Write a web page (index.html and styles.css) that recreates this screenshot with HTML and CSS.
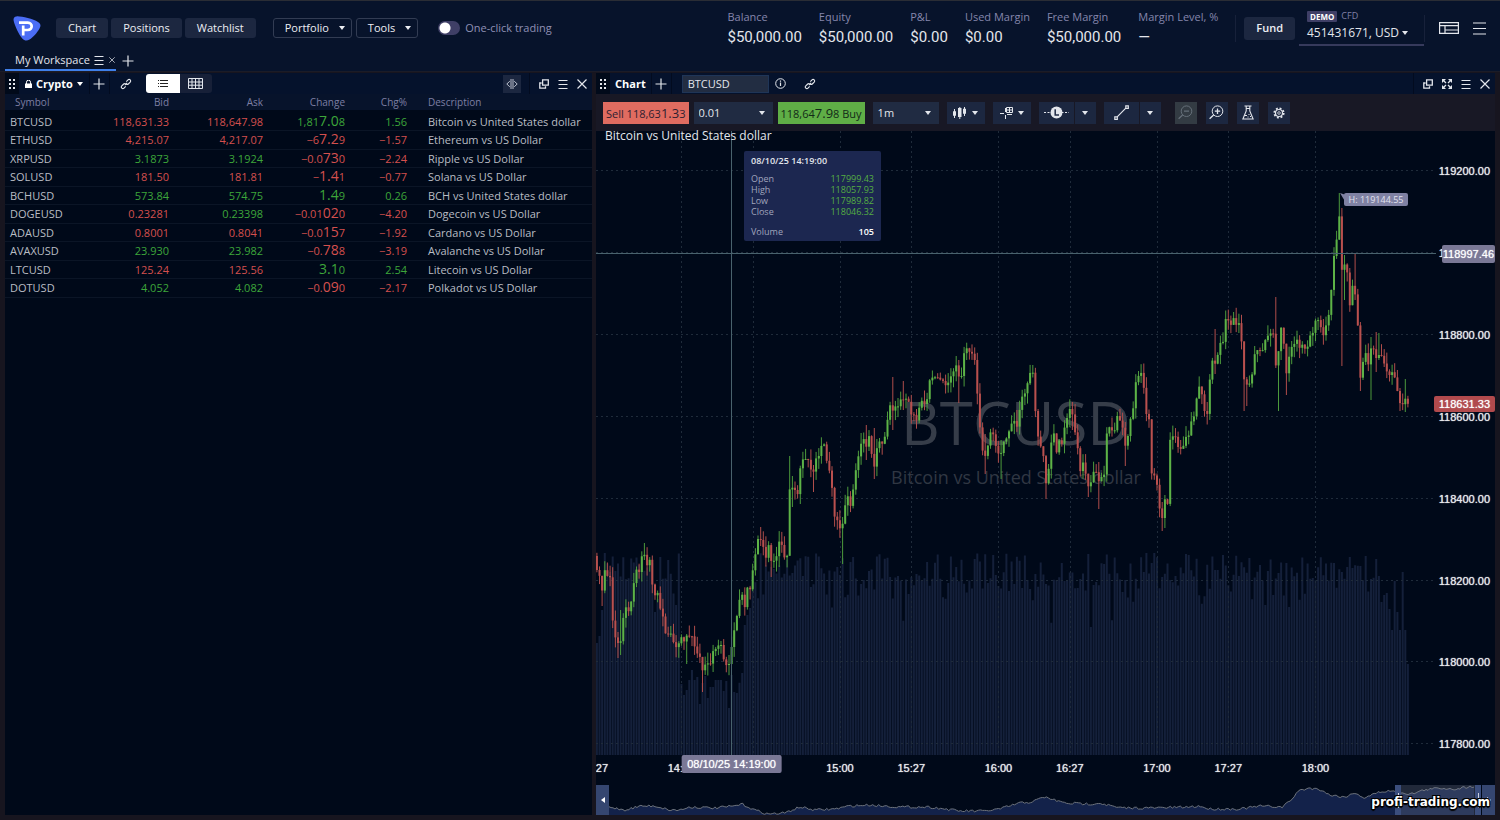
FILE: index.html
```html
<!DOCTYPE html>
<html lang="en">
<head>
<meta charset="utf-8">
<title>My Workspace</title>
<link rel="stylesheet" href="styles.css">
</head>
<body>
<svg class="defs" aria-hidden="true">
  <symbol id="i-link" viewBox="0 0 12 12"><g fill="none" stroke="currentColor" stroke-width="1.1"><path d="M6.3 3.6 8 1.9a1.5 1.5 0 0 1 2.2 2.2L8.3 6a1.5 1.5 0 0 1-2.1 0"/><path d="M5.7 8.4 4 10.1a1.5 1.5 0 0 1-2.2-2.2L3.7 6a1.5 1.5 0 0 1 2.1 0"/><path d="M4.8 7.2 7.2 4.8"/></g></symbol>
  <symbol id="i-grip" viewBox="0 0 7 10"><path fill="currentColor" d="M0 0h2v2H0zM4 0h2v2H4zM0 4h2v2H0zM4 4h2v2H4zM0 8h2v2H0zM4 8h2v2H4z"/></symbol>
  <symbol id="i-plus" viewBox="0 0 12 12"><path stroke="currentColor" stroke-width="1.2" d="M6 .5v11M.5 6h11"/></symbol>
  <symbol id="i-menu" viewBox="0 0 10 10"><path stroke="currentColor" stroke-width="1" d="M.5 1.500h9M.5 5.500h9M.5 9.500h9"/></symbol>
  <symbol id="i-close" viewBox="0 0 10 10"><path stroke="currentColor" stroke-width="1.2" d="M.5.5l9 9M9.500.5l-9 9"/></symbol>
  <symbol id="i-pop" viewBox="0 0 10 10"><g fill="none" stroke="currentColor" stroke-width="1.3"><path d="M3.600.8h5.700v5.300H3.600z"/><path d="M2.600 4H.8v5.200h5.700V7.200"/></g></symbol>
  <symbol id="i-caret" viewBox="0 0 6 4"><path fill="currentColor" d="M0 0h6L3 4z"/></symbol>
</svg>

<div class="app">
  <header class="top">
    <svg class="logo" viewBox="0 0 28 25" role="img" aria-label="Logo">
      <path fill="#4b6df5" d="M3.500.4C8 0 20 3 25 6c3 1.700 3 4 1.500 6.500C24 17 20 21.500 16.500 23.500c-2.500 1.500-5 1.300-7-.8C6 19 1.500 9 .6 4.500.2 2 1.300.6 3.500.4z"/>
      <path fill="none" stroke="#fff" stroke-width="2.700" d="M6 6.700h8.800c5.200 0 5.200 7.300 0 7.300h-4.600v5.500M10.200 9.400v5"/>
    </svg>
    <nav class="group nav">
      <button class="btn">Chart</button><button class="btn">Positions</button><button class="btn">Watchlist</button>
    </nav>
    <div class="group">
      <button class="btn outline">Portfolio <svg class="caret"><use href="#i-caret"/></svg></button>
      <button class="btn outline">Tools <svg class="caret"><use href="#i-caret"/></svg></button>
    </div>
    <label class="toggle"><input type="checkbox"><span>One-click trading</span></label>
    <dl class="metrics">
      <div><dt>Balance</dt><dd>$50,000.00</dd></div>
      <div><dt>Equity</dt><dd>$50,000.00</dd></div>
      <div><dt>P&amp;L</dt><dd>$0.00</dd></div>
      <div><dt>Used Margin</dt><dd>$0.00</dd></div>
      <div><dt>Free Margin</dt><dd>$50,000.00</dd></div>
      <div><dt>Margin Level, %</dt><dd>—</dd></div>
    </dl>
    <div class="fund-wrap"><button class="btn fund">Fund</button></div>
    <button class="account">
      <span class="kind"><b>DEMO</b>CFD</span>
      <span class="number">451431671, USD <svg class="caret"><use href="#i-caret"/></svg></span>
    </button>
    <div class="tools">
      <button class="icon" aria-label="Layout"><svg width="20" height="12" viewBox="0 0 20 12"><path fill="none" stroke="currentColor" stroke-width="1.200" d="M.6.6h18.800v10.800H.6zM.6 3.600h18.800M6 3.600v7.800M6 8h13.400"/></svg></button>
      <button class="icon" aria-label="Menu"><svg width="13" height="13" viewBox="0 0 13 13"><path stroke="currentColor" stroke-width="1.200" d="M0 1h13M0 6.500h13M0 12h13"/></svg></button>
    </div>
  </header>

  <div class="tabs">
    <div class="tab">My Workspace
      <button class="icon" aria-label="Workspace menu"><svg width="10" height="10"><use href="#i-menu"/></svg></button>
      <button class="icon" aria-label="Close workspace"><svg width="6" height="6"><use href="#i-close"/></svg></button>
    </div>
    <button class="icon" aria-label="Add workspace"><svg width="12" height="12"><use href="#i-plus"/></svg></button>
  </div>

  <main class="panels">
    <section class="panel">
      <div class="bar">
        <span class="grip"><svg width="7" height="10"><use href="#i-grip"/></svg></span>
        <button class="title list"><svg width="7" height="8" viewBox="0 0 7 8"><path fill="currentColor" d="M0 3.500h7V8H0z"/><path fill="none" stroke="currentColor" d="M1.500 4V2.200a2 2 0 0 1 4 0V4"/></svg>Crypto<svg class="caret"><use href="#i-caret"/></svg></button>
        <button class="cell" aria-label="Add"><svg width="12" height="12"><use href="#i-plus"/></svg></button>
        <button class="cell linkcell" aria-label="Link"><svg width="12" height="12"><use href="#i-link"/></svg></button>
        <div class="views">
          <button class="on" aria-label="List view"><svg width="10" height="8" viewBox="0 0 10 8"><path stroke="currentColor" d="M0 .5h1M0 3.500h1M0 6.500h1M2 .5h8M2 3.500h8M2 6.500h8"/></svg></button>
          <button aria-label="Grid view"><svg width="15" height="11" viewBox="0 0 15 11"><path fill="none" stroke="currentColor" d="M.5.5h14v10H.5zM.5 4h14M.5 7.200h14M4 .5v10M7.500.5v10M11 .5v10"/></svg></button>
        </div>
        <span class="fill"></span>
        <button class="fit" aria-label="Fit columns"><svg width="12" height="10" viewBox="0 0 12 10"><path fill="none" stroke="currentColor" d="M5 0v10M7 0v10M3.800 2.200.8 5l3 2.800M8.200 2.200l3 2.800-3 2.800"/></svg></button>
        <div class="winbtns">
          <button class="icon" aria-label="Detach"><svg width="10" height="10"><use href="#i-pop"/></svg></button>
          <button class="icon" aria-label="Menu"><svg width="10" height="10"><use href="#i-menu"/></svg></button>
          <button class="icon" aria-label="Close"><svg width="10" height="10"><use href="#i-close"/></svg></button>
        </div>
      </div>
      <table class="quotes">
        <colgroup><col class="c-sym"><col class="c-bid"><col class="c-ask"><col class="c-chg"><col class="c-pct"><col></colgroup>
        <thead><tr><th>Symbol</th><th>Bid</th><th>Ask</th><th>Change</th><th>Chg%</th><th>Description</th></tr></thead>
        <tbody>
          <tr><td>BTCUSD</td><td class="dn">118,631.33</td><td class="dn">118,647.98</td><td class="up">1,81<b>7.0</b>8</td><td class="up">1.56</td><td>Bitcoin vs United States dollar</td></tr>
          <tr><td>ETHUSD</td><td class="dn">4,215.07</td><td class="dn">4,217.07</td><td class="dn">−6<b>7.2</b>9</td><td class="dn">−1.57</td><td>Ethereum vs US Dollar</td></tr>
          <tr><td>XRPUSD</td><td class="up">3.1873</td><td class="up">3.1924</td><td class="dn">−0.0<b>73</b>0</td><td class="dn">−2.24</td><td>Ripple vs US Dollar</td></tr>
          <tr><td>SOLUSD</td><td class="dn">181.50</td><td class="dn">181.81</td><td class="dn">−<b>1.4</b>1</td><td class="dn">−0.77</td><td>Solana vs US Dollar</td></tr>
          <tr><td>BCHUSD</td><td class="up">573.84</td><td class="up">574.75</td><td class="up"><b>1.4</b>9</td><td class="up">0.26</td><td>BCH vs United States dollar</td></tr>
          <tr><td>DOGEUSD</td><td class="dn">0.23281</td><td class="up">0.23398</td><td class="dn">−0.01<b>02</b>0</td><td class="dn">−4.20</td><td>Dogecoin vs US Dollar</td></tr>
          <tr><td>ADAUSD</td><td class="dn">0.8001</td><td class="dn">0.8041</td><td class="dn">−0.0<b>15</b>7</td><td class="dn">−1.92</td><td>Cardano vs US Dollar</td></tr>
          <tr><td>AVAXUSD</td><td class="up">23.930</td><td class="up">23.982</td><td class="dn">−0.<b>78</b>8</td><td class="dn">−3.19</td><td>Avalanche vs US Dollar</td></tr>
          <tr><td>LTCUSD</td><td class="dn">125.24</td><td class="dn">125.56</td><td class="up"><b>3.1</b>0</td><td class="up">2.54</td><td>Litecoin vs US Dollar</td></tr>
          <tr><td>DOTUSD</td><td class="up">4.052</td><td class="up">4.082</td><td class="dn">−0.<b>09</b>0</td><td class="dn">−2.17</td><td>Polkadot vs US Dollar</td></tr>
        </tbody>
      </table>
    </section>

    <section class="panel">
      <div class="bar">
        <span class="grip"><svg width="7" height="10"><use href="#i-grip"/></svg></span>
        <span class="title">Chart</span>
        <button class="cell" aria-label="Add"><svg width="12" height="12"><use href="#i-plus"/></svg></button>
        <input class="symbol" type="text" value="BTCUSD" aria-label="Symbol">
        <button class="icon info" aria-label="Info"><svg width="11" height="11" viewBox="0 0 11 11"><circle cx="5.500" cy="5.500" r="4.800" fill="none" stroke="currentColor"/><path stroke="currentColor" stroke-width="1.200" d="M5.500 4.500V8M5.500 2.600v1.200"/></svg></button>
        <button class="icon" aria-label="Link"><svg width="12" height="12"><use href="#i-link"/></svg></button>
        <span class="fill"></span>
        <div class="winbtns">
          <button class="icon" aria-label="Detach"><svg width="10" height="10"><use href="#i-pop"/></svg></button>
          <button class="icon" aria-label="Full screen"><svg width="10" height="10" viewBox="0 0 10 10"><path fill="currentColor" d="M0 0h4L0 4zM10 0v4L6 0zM0 10V6l4 4zM10 10H6l4-4z"/><path stroke="currentColor" stroke-width="1.300" d="M1 1l3 3M9 1 6 4M1 9l3-3M9 9 6 6"/></svg></button>
          <button class="icon" aria-label="Menu"><svg width="10" height="10"><use href="#i-menu"/></svg></button>
          <button class="icon" aria-label="Close"><svg width="10" height="10"><use href="#i-close"/></svg></button>
        </div>
      </div>

      <div class="toolbar">
        <button class="deal sell">Sell 118,63<b>1.3</b>3</button>
        <label class="pick lots"><select aria-label="Lots"><option>0.01</option></select><svg class="caret"><use href="#i-caret"/></svg></label>
        <button class="deal buy">118,64<b>7.9</b>8 Buy</button>
        <label class="pick period"><select aria-label="Period"><option>1m</option></select><svg class="caret"><use href="#i-caret"/></svg></label>
        <button class="tool wide" aria-label="Chart type"><svg width="14" height="12" viewBox="0 0 14 12"><path fill="none" stroke="currentColor" d="M1.500 2v9M11.500 0v9M0.500 4.500h2v4h-2zM10.500 2h2v4.500h-2z"/><path fill="currentColor" d="M5 1h3.500v9H5zM6.300 0h1v12h-1z"/></svg><svg class="caret"><use href="#i-caret"/></svg></button>
        <button class="tool wide" aria-label="Crosshair"><svg width="13" height="12" viewBox="0 0 13 12"><path stroke="currentColor" d="M0 6.500h4M5.500 1v4M5.500 8v4M7 7.500h5"/><path fill="none" stroke="currentColor" d="M6.500.5h6v5h-6zM6.500 3h6M9.500.5v5"/></svg><svg class="caret"><use href="#i-caret"/></svg></button>
        <span class="split"><button class="tool" aria-label="Levels"><svg width="25" height="13" viewBox="0 0 25 13"><path stroke="currentColor" stroke-width="1.200" stroke-dasharray="2 1.500" d="M0 6.500h25"/><circle cx="12.500" cy="6.500" r="6" fill="currentColor"/><path fill="none" stroke="#202b45" stroke-width="1.500" d="M11.200 3.300v5.700H15"/></svg></button><button class="tool" aria-label="Level options"><svg class="caret"><use href="#i-caret"/></svg></button></span>
        <span class="split"><button class="tool" aria-label="Trend line"><svg width="15" height="15" viewBox="0 0 15 15"><path fill="none" stroke="currentColor" stroke-width="1.200" d="M2.700 12.300 12.300 2.700M.8 11.800h2.500v2.500H.8zM11.800.8h2.500v2.500h-2.500z"/></svg></button><button class="tool" aria-label="Drawing options"><svg class="caret"><use href="#i-caret"/></svg></button></span>
        <button class="tool sq off" disabled aria-label="Zoom out"><svg width="15" height="15" viewBox="0 0 15 15"><circle cx="8.500" cy="6.200" r="5.300" fill="none" stroke="currentColor"/><path stroke="currentColor" stroke-width="1.200" d="M6 6.200h5M4.600 10 .6 13.800"/></svg></button>
        <button class="tool sq" aria-label="Zoom in"><svg width="15" height="15" viewBox="0 0 15 15"><circle cx="8.500" cy="6.200" r="5.300" fill="none" stroke="currentColor"/><path stroke="currentColor" stroke-width="1.300" d="M5.800 6.200h5.400M8.500 3.500v5.400M4.600 10 .6 13.800"/></svg></button>
        <button class="tool sq" aria-label="Indicators"><svg width="12" height="15" viewBox="0 0 12 15"><path fill="none" stroke="currentColor" stroke-width="1.100" d="M2.500 1h7M4.200 1v5L.9 14h10.200L7.800 6V1M4.200 3.500h3.600"/><path fill="none" stroke="currentColor" d="M3 10.500h2M6.500 9.500h1M5.500 12h1M8 11.500h1"/></svg></button>
        <button class="tool sq" aria-label="Settings"><svg width="12" height="12" viewBox="0 0 12 12"><circle cx="6" cy="6" r="4.700" fill="none" stroke="currentColor" stroke-width="1.800" stroke-dasharray="1.900 1.790"/><circle cx="6" cy="6" r="3.500" fill="none" stroke="currentColor" stroke-width="1.200"/><circle cx="6" cy="6" r="1.300" fill="none" stroke="currentColor" stroke-width=".8"/></svg></button>
      </div>

      <div class="chart">
        <div class="stage">
          <div class="plot">
            <svg id="grid" class="layer" viewBox="0 0 840 624" preserveAspectRatio="none"></svg>
            <div class="mark"><strong>BTCUSD</strong><span>Bitcoin vs United States dollar</span></div>
            <svg id="candles" class="layer" viewBox="0 0 840 624" preserveAspectRatio="none"></svg>
            <div class="caption">Bitcoin vs United States dollar</div>
            <div class="tip">
              <h2>08/10/25 14:19:00</h2>
              <dl>
                <dt>Open</dt><dd>117999.43</dd>
                <dt>High</dt><dd>118057.93</dd>
                <dt>Low</dt><dd>117989.82</dd>
                <dt>Close</dt><dd>118046.32</dd>
                <dt class="vol">Volume</dt><dd class="vol">105</dd>
              </dl>
            </div>
            <div class="peak">H: 119144.55</div>
          </div>
          <div class="prices" id="prices"></div>
        </div>
        <div class="times" id="times"></div>
        <div class="nav-strip">
          <button class="scroll" aria-label="Scroll left"><svg width="4" height="6" viewBox="0 0 4 6"><path fill="#fff" d="M4 0v6L0 3z"/></svg></button>
          <div class="overview">
            <svg id="overview" class="layer" viewBox="609 785 874 30" preserveAspectRatio="none"></svg>
            <div class="window"><i></i><i></i></div>
          </div>
          <button class="scroll" aria-label="Scroll right"><svg width="4" height="6" viewBox="0 0 4 6"><path fill="#fff" d="M0 0v6l4-3z"/></svg></button>
        </div>
      </div>
    </section>
  </main>
  <div class="credit">profi-trading.com</div>
</div>
<script src="chart.js"></script>
</body>
</html>
```
FILE: styles.css
```css
* { box-sizing: border-box; }
body { margin: 0; background: #17151f; color: #e3e6ec; font: 11px/16px "Open Sans", "Noto Sans", sans-serif; }
button, input, select { font: inherit; color: inherit; border: 0; background: none; margin: 0; padding: 0; }
svg { display: block; flex: none; }
dl, dd, h2 { margin: 0; }
.defs { position: absolute; width: 0; height: 0; }
.caret { width: 6px; height: 4px; }
.icon { display: flex; align-items: center; justify-content: center; }
.fill { flex: 1; }

.app { position: relative; display: flex; flex-direction: column; height: 100vh; min-height: 480px; border-top: 1px solid #2a2d35; }

/* Top bar */
.top { display: flex; align-items: center; height: 50px; padding-left: 13px; padding-top: 4px; background: #07132b; white-space: nowrap; }
.logo { width: 28px; height: 25px; margin-right: 15px; }
.group { display: flex; gap: 4px; }
.nav { gap: 3px; margin-right: 17px; }
.btn { display: flex; align-items: center; height: 20px; padding: 0 12px; border-radius: 3px; background: #1c2740; color: #eceef3; }
.outline { background: none; border: 1px solid #323c53; padding: 0 6px 0 11px; gap: 10px; }
.toggle { display: flex; align-items: center; gap: 5px; margin-left: 20px; color: #8f90b5; }
.toggle input { appearance: none; width: 22px; height: 14px; border-radius: 7px; background: radial-gradient(circle at 7px 7px, #fff 5px, #3f3f66 6px); }
.metrics { display: flex; gap: 17px; margin-left: auto; margin-right: 17px; align-self: flex-start; padding-top: 3px; }
.metrics dt { color: #8586ab; line-height: 17px; }
.metrics dd { font: 15px/24px Roboto, "Open Sans", sans-serif; }
.fund-wrap { border-left: 1px solid #17213a; padding: 2px 4px 2px 8px; }
.fund { height: 23px; font-weight: 600; }
.account { display: flex; flex-direction: column; align-items: flex-start; width: 125px; height: 36px; padding: 0 8px; border-bottom: 2px solid #363a5c; }
.kind { display: flex; align-items: center; gap: 4px; height: 12px; color: #7f80a5; font-size: 9px; }
.kind b { padding: 0 3px; border-radius: 1px; background: #3f3f66; color: #fff; font-size: 8px; line-height: 11px; }
.number { display: flex; align-items: center; gap: 3px; font-size: 12px; line-height: 22px; }
.tools { display: flex; align-items: center; gap: 14px; height: 27px; padding: 0 14px; border-left: 1px solid #17213a; }

/* Workspace tabs */
.tabs { display: flex; gap: 6px; height: 21px; padding: 0 5px; background: #07132b; border-bottom: 1px solid #1b1c28; }
.tab { display: flex; align-items: center; gap: 4px; padding: 0 0 0 10px; border-bottom: 2px solid #3f80ea; }
.tab .icon:last-child { width: 8px; }

/* Panels */
.panels { flex: 1; display: grid; grid-template-columns: 587fr 899fr; gap: 4px; padding: 1px 5px 5px; min-height: 0; }
.panel { display: flex; flex-direction: column; min-width: 0; min-height: 0; background: #000919; }
.bar { display: flex; align-items: center; height: 21px; background: #05122c; white-space: nowrap; }
.grip { display: flex; align-items: center; justify-content: center; width: 14px; height: 21px; background: #010a1a; }
.title { display: flex; align-items: center; gap: 4px; height: 21px; padding: 0 5px; font-weight: 700; color: #fff; }
.list { padding: 0 6px; }
.cell { display: flex; align-items: center; justify-content: center; width: 21px; height: 21px; border-left: 1px solid #020b1f; border-right: 1px solid #020b1f; }
.linkcell { width: 32px; border: 0; }
.views { display: flex; margin-left: 4px; }
.views button { display: flex; align-items: center; justify-content: center; width: 32px; height: 19px; border-radius: 0 3px 3px 0; background: #172038; }
.views .on { width: 34px; border-radius: 3px 0 0 3px; background: #fff; color: #222; }
.fit { display: flex; align-items: center; justify-content: center; width: 18px; height: 18px; background: #1c2740; color: #b9bfcc; }
.winbtns { display: flex; gap: 9px; margin-left: 8px; padding: 0 5px 0 9px; height: 21px; border-left: 1px solid #020b1f; }
.symbol { width: 87px; height: 18px; padding: 0 5px; margin: 0 6px 0 10px; border: 1px solid #1f3557; background: #222d42; }
.info { margin-right: 18px; }

/* Quotes */
.quotes { width: 100%; table-layout: fixed; border-collapse: collapse; white-space: nowrap; }
.c-sym { width: 70px; }
.c-bid { width: 94px; }
.c-ask { width: 94px; }
.c-chg { width: 82px; }
.c-pct { width: 62px; }
.quotes th { height: 16px; padding: 0; background: #07132b; color: #7d7fa3; font-size: 10px; line-height: 16px; font-weight: 400; text-align: right; }
.quotes th:first-child { text-align: left; padding-left: 10px; }
.quotes th:last-child, .quotes td:last-child { text-align: left; padding-left: 21px; }
.quotes td { height: 18px; padding: 0; border-bottom: 1px solid #0b1526; line-height: 16px; text-align: right; color: #b9bdc4; }
.quotes tbody tr:nth-child(1) td { padding-top: 4px; }
.quotes tbody tr:nth-child(even) td { height: 19px; }
.quotes td:first-child { text-align: left; padding-left: 5px; }
.quotes b { font-size: 14px; font-weight: 400; line-height: 14px; }
.quotes .up { color: #3da63a; }
.quotes .dn { color: #d4504e; }

/* Chart toolbar */
.toolbar { display: flex; align-items: center; height: 37px; padding: 0 7px; background: #181825; white-space: nowrap; }
.toolbar > * { flex: none; }
.deal { height: 22px; padding: 0 3px; color: #2e2030; line-height: 22px; }
.deal b { font-size: 13px; font-weight: 400; }
.sell { background: #e06c60; }
.buy { background: #5fae46; color: #122a18; }
.pick { position: relative; height: 22px; background: #202b42; }
.pick select { appearance: none; width: 100%; height: 22px; padding: 0 5px; }
.pick .caret { position: absolute; right: 8px; top: 9px; }
.lots { width: 79px; margin: 0 5px; }
.period { width: 66px; margin: 0 8px; }
.tool { display: flex; align-items: center; justify-content: center; gap: 5px; height: 22px; background: #1c2740; }
.wide { width: 38px; margin-right: 8px; }
.split { display: flex; gap: 1px; margin-right: 8px; }
.split .tool:first-child { width: 35px; }
.split .tool:last-child { width: 21px; }
.sq { width: 22px; margin-right: 9px; }
.split + .sq { margin-left: 6px; }
.off { background: #333b43; color: #66707a; }

/* Chart */
.chart { flex: 1; display: flex; flex-direction: column; min-height: 0; }
.stage { flex: 1; display: flex; min-height: 0; }
.plot { position: relative; flex: 1; }
.layer { position: absolute; inset: 0; width: 100%; height: 100%; }
.mark { position: absolute; inset: 0; display: flex; flex-direction: column; align-items: center; padding-top: 251px; color: #363d49; }
.mark strong { font-size: 60px; line-height: 80px; font-weight: 400; }
.mark span { font-size: 18px; line-height: 30px; color: #303743; }
.caption { position: absolute; left: 9px; top: -3px; font-size: 12px; line-height: 16px; }
.tip { position: absolute; left: 148px; top: 20px; width: 137px; padding: 2px 7px 4px; border-radius: 2px; background: #1c2750; font-size: 9px; }
.tip h2 { font-size: 9px; line-height: 16px; font-weight: 600; margin-bottom: 4px; }
.tip dl { display: grid; grid-template-columns: 1fr auto; line-height: 11px; }
.tip dt { color: #a0a5bd; }
.tip dd { color: #55ae43; text-align: right; }
.tip .vol { padding-top: 9px; }
.tip dd.vol { color: #fff; font-weight: 600; }
.peak { position: absolute; left: 89%; top: 10%; padding: 0 5px; border-radius: 2px; background: #7f81a3; color: #e1e2ee; font-size: 9px; line-height: 13px; }
.prices { position: relative; width: 59px; }
.prices, .times { font: 11px/18px "Liberation Sans", Arial, sans-serif; color: #e8eaee; text-shadow: 0 0 1px #e8eaee; }
.prices span { position: absolute; right: 5px; transform: translateY(-50%); }
.prices .cross { right: 0; padding: 0 1px; border-radius: 2px; background: #7a7896; color: #fff; }
.prices .last { right: 0; padding: 0 5px; border-radius: 2px; background: #b14a4d; color: #fff; line-height: 16px; }
.times { position: relative; height: 30px; margin-right: 59px; clip-path: inset(0); }
.times span { position: absolute; top: 4px; transform: translateX(-50%); }
.times .cross { top: 0; padding: 0 6px; border-radius: 2px; background: #7a7896; color: #fff; }
.nav-strip { display: flex; height: 30px; }
.scroll { display: flex; align-items: center; justify-content: center; width: 13px; background: #354670; }
.overview { position: relative; flex: 1; }
.window { position: absolute; top: 0; bottom: 0; right: 1px; width: 86px; display: flex; justify-content: space-between; background: rgba(120, 125, 145, 0.28); }
.window i { width: 6px; background: linear-gradient(#cdd2df, #cdd2df) center / 1px 15px no-repeat #3b4e7d; }

.credit { position: absolute; right: 10px; bottom: 10px; color: #fff; font: bold 12px/16px "DejaVu Sans", sans-serif; text-shadow: 1px 1px 0 #000, -1px -1px 0 #000, 1px -1px 0 #000, -1px 1px 0 #000, 0 2px 1px #000; }
```
FILE: chart.js
```js
// Trace of closing levels: x,y pairs on the chart canvas (origin 596,131).
const closes = `597,570 600,577 603,596 605,567 608,578 611,577 613,628 616,640 618,643 621,641 623,619 626,607 629,612 631,603 634,582
637,567 640,574 642,554 645,555 648,570 650,558 653,592 656,597 658,592 661,614 664,618 666,638 669,633 672,634 674,645 677,648 680,640
682,636 685,644 687,634 690,637 693,636 695,649 698,655 701,658 703,674 706,661 709,665 711,663 714,646 717,651 719,643 722,646 724,662
727,666 730,663 732,643 735,626 738,610 741,590 743,598 745,608 748,583 751,592 753,567 756,551 758,539 761,540 764,549 766,558 769,543
772,567 775,557 777,556 780,536 782,546 785,560 788,554 790,479 793,490 796,490 798,495 801,460 804,459 808,459 811,470 814,472 817,453
820,458 822,441 825,446 828,472 830,470 833,497 836,533 838,513 841,537 843,520 846,500 848,496 851,508 854,482 857,462 860,450 862,438
865,440 867,450 870,429 873,475 876,455 878,440 881,443 884,445 886,425 888,418 891,400 893,412 896,405 899,407 901,398 904,400 907,398
910,405 912,420 915,412 917,423 920,402 923,400 926,408 928,392 931,372 933,380 936,376 939,379 942,380 944,382 947,388 950,375 952,378
955,365 958,366 960,392 962,370 965,346 968,350 971,354 974,353 976,374 978,404 981,440 984,460 987,450 989,440 991,430 994,436 996,447
999,455 1002,452 1004,440 1007,438 1010,428 1013,420 1016,422 1018,432 1020,404 1023,394 1026,393 1028,380 1031,370 1033,373 1036,420
1039,444 1042,448 1044,460 1047,495 1049,463 1052,436 1055,432 1057,458 1060,434 1063,450 1065,420 1068,417 1070,408 1073,416 1075,432
1078,450 1081,477 1084,455 1086,478 1089,489 1091,482 1094,470 1097,473 1099,482 1102,476 1105,474 1107,428 1110,427 1113,432 1115,430
1118,412 1121,425 1124,430 1126,455 1129,425 1131,417 1134,405 1136,380 1139,375 1142,372 1144,390 1147,420 1150,419 1152,484 1155,473
1157,485 1160,512 1163,520 1165,498 1168,505 1170,440 1173,436 1176,437 1178,447 1181,449 1184,445 1187,433 1189,436 1192,417 1195,416
1197,394 1200,384 1202,395 1204,410 1207,416 1210,377 1212,360 1215,364 1218,354 1221,340 1223,342 1226,316 1228,320 1231,325 1234,317
1236,325 1239,323 1242,345 1244,379 1247,385 1249,385 1252,375 1255,352 1257,350 1260,351 1263,350 1266,337 1269,335 1271,333 1274,334
1276,368 1278,356 1281,327 1284,345 1287,380 1290,346 1292,347 1295,343 1298,338 1300,350 1303,343 1306,352 1308,345 1311,332 1313,333
1316,318 1319,321 1321,328 1324,337 1327,320 1329,314 1332,283 1335,242 1337,239 1340,209 1342,273 1345,263 1348,276 1350,308 1353,281
1356,300 1358,329 1361,390 1363,362 1366,352 1369,368 1372,338 1374,352 1377,360 1380,352 1382,357 1385,366 1388,375 1390,375 1393,371
1396,382 1398,395 1401,407 1404,402 1406,397 1408,404`.trim().split(/\s+/).map(p => p.split(',').map(Number));

// Long wicks: x, top, bottom
const wicks = [[603,576,606],[618,632,658],[621,610,655],[645,543,560],[687,634,664],[703,659,692],[761,527,546],[772,543,577],[790,456,555],
  [793,476,507],[814,465,492],[843,517,564],[867,425,460],[873,428,479],[893,377,430],[904,381,410],[960,360,403],[984,434,474],[1002,440,479],
  [1047,455,499],[1073,402,430],[1089,475,497],[1099,462,509],[1126,422,466],[1163,502,531],[1215,329,374],[1234,312,322],[1244,345,411],
  [1247,377,406],[1276,297,368],[1278,353,411],[1281,327,360],[1287,360,395],[1340,193,240],[1342,208,366],[1345,255,300],[1356,253,300],
  [1361,322,391],[1372,337,400],[1377,332,372],[1380,333,360],[1404,379,412],[1401,388,411]];

let seed = 7;
const rnd = () => (seed = (seed * 16807) % 2147483647) / 2147483647;
const STEP = 2.642, FIRST = -32, COUNT = 308;
const xAt = m => 681.4 + m * STEP;
const at = (pts, x) => {
  let i = 1;
  while (i < pts.length - 1 && pts[i][0] < x) i++;
  const [a, b] = [pts[i - 1], pts[i]];
  const t = Math.min(1, Math.max(0, (x - a[0]) / (b[0] - a[0])));
  return a[1] + (b[1] - a[1]) * t;
};
const yPrice = p => 335 + (118800 - p) * 0.4092;

const lows = [[682,684],[685,695],[687,690],[690,680],[693,670],[695,680],[698,677],[701,704],[703,683],[706,676],[709,698],[711,687],[714,687],
  [717,680],[719,667],[722,680],[724,691],[727,681],[730,708],[732,675],[735,692],[738,693],[741,673],[743,662],[746,625],[748,615],[751,608]];
const tail = [[1379,576],[1382,602],[1385,595],[1387,593],[1390,609],[1393,630],[1395,581],[1398,612],[1401,630],[1403,572],[1406,630],[1408,664]];
const head = [[597,643],[600,636],[603,610],[605,553]];

let grid = '', vol = '', wick = '', body = '';
const gx = [0, 27, 60, 87, 120, 147, 180, 207, 240].map(xAt);
const gp = [119200, 119000, 118800, 118600, 118400, 118200, 118000, 117800];

let prev = 556;
for (let k = 0; k < COUNT; k++) {
  const x = xAt(FIRST + k), near = t => t.find(p => Math.abs(p[0] - x) < 1.4);
  const r = rnd();
  let top = 553 + r * 28 + (rnd() < 0.28 ? rnd() * 42 : 0);
  if (x > 900 && x < 1130 && r > 0.4) top += 8;
  if (x > 855 && x < 862) top += 20;
  const fixed = x < 606 ? near(head) : x < 681 ? null : x < 752 ? near(lows) : x > 1378 ? near(tail) : null;
  if (fixed) top = fixed[1];
  else if (x > 681 && x < 752) top = at(lows, x);
  else if (x > 1378) top = at(tail, x);
  vol += `M${(x - 596).toFixed(1)} ${(top - 131).toFixed(1)}V624`;

  const c = at(closes, x), up = c < prev, w = wicks.find(p => Math.abs(p[0] - x) < 1.33);
  let hi = Math.min(prev, c), lo = Math.max(prev, c);
  const bt = hi, bb = Math.max(lo, hi + 1);
  if (w) { hi = Math.min(w[1], bt); lo = Math.max(w[2], bb); }
  else { hi -= rnd() * 11; lo += rnd() * 11; }
  const col = up ? '#4c9a3c' : '#b04e4b', fill = up ? '#5db347' : '#b9504e';
  const px = x - 596;
  wick += `<path stroke="${col}" d="M${px.toFixed(1)} ${(hi - 131).toFixed(1)}V${(lo - 131).toFixed(1)}"/>`;
  body += `<rect fill="${fill}" x="${(px - 1).toFixed(1)}" y="${(bt - 131).toFixed(1)}" width="2" height="${(bb - bt).toFixed(1)}"/>`;
  prev = c;
}
gx.forEach(x => grid += `<path d="M${Math.round(x - 596) + .5} 0V624"/>`);
gp.forEach(p => grid += `<path d="M0 ${Math.round(yPrice(p) - 131) - .5}H840"/>`);

document.getElementById('grid').innerHTML =
  `<path d="${vol}" stroke="#14203a" stroke-width="2"/><g stroke="#1f2b3a" stroke-dasharray="2 3" fill="none">${grid}</g>`;
document.getElementById('candles').innerHTML =
  `${wick}${body}<path stroke="#49626d" d="M135.500 0V624M0 122.500H840"/><path fill="#7f81a3" d="M744 62l6 2v8z"/>`;

document.getElementById('prices').innerHTML =
  gp.map(p => `<span style="top:${((yPrice(p) - 131) / 6.24).toFixed(2)}%">${p}.00</span>`).join('') +
  `<span class="cross" style="top:${((yPrice(118997.46) - 131) / 6.24).toFixed(2)}%">118997.46</span>` +
  `<span class="last" style="top:${((yPrice(118631.33) - 131) / 6.24).toFixed(2)}%">118631.33</span>`;

const names = ['14:00', '14:27', '15:00', '15:27', '16:00', '16:27', '17:00', '17:27', '18:00'];
document.getElementById('times').innerHTML =
  `<span style="left:${((xAt(-33) - 596) / 8.4).toFixed(2)}%">13:27</span>` +
  names.map((n, i) => `<span style="left:${((gx[i] - 596) / 8.4).toFixed(2)}%">${n}</span>`).join('') +
  `<span class="cross" style="left:${((xAt(19) - 596) / 8.4).toFixed(2)}%">08/10/25 14:19:00</span>`;

// Overview strip
const line = [[609,807],[625,810],[640,806],[655,806],[670,810],[680,810],[690,807],[715,808],[735,806],[742,804],[755,810],[768,814],[785,813],
  [800,807],[815,810],[835,809],[850,806],[870,805],[900,807],[930,807],[960,811],[985,811],[1000,809],[1020,803],[1032,802],[1045,797],[1065,803],
  [1090,804],[1100,803],[1120,808],[1150,808],[1190,807],[1200,806],[1210,809],[1240,809],[1262,806],[1283,807],[1292,800],[1299,791],[1310,788],
  [1323,790],[1330,795],[1345,797],[1357,793],[1365,798],[1380,792],[1390,791],[1412,794],[1425,790],[1440,788],[1455,789],[1476,786]];
let d = '';
for (let x = 609; x <= 1476; x += 2) d += `${d ? 'L' : 'M'}${x} ${(at(line, x) + rnd() * 2.4 - 1.2).toFixed(1)}`;
document.getElementById('overview').innerHTML =
  `<path fill="#13224a" d="${d}V815H609z"/><path fill="none" stroke="#6d737c" d="${d}"/>`;
```
